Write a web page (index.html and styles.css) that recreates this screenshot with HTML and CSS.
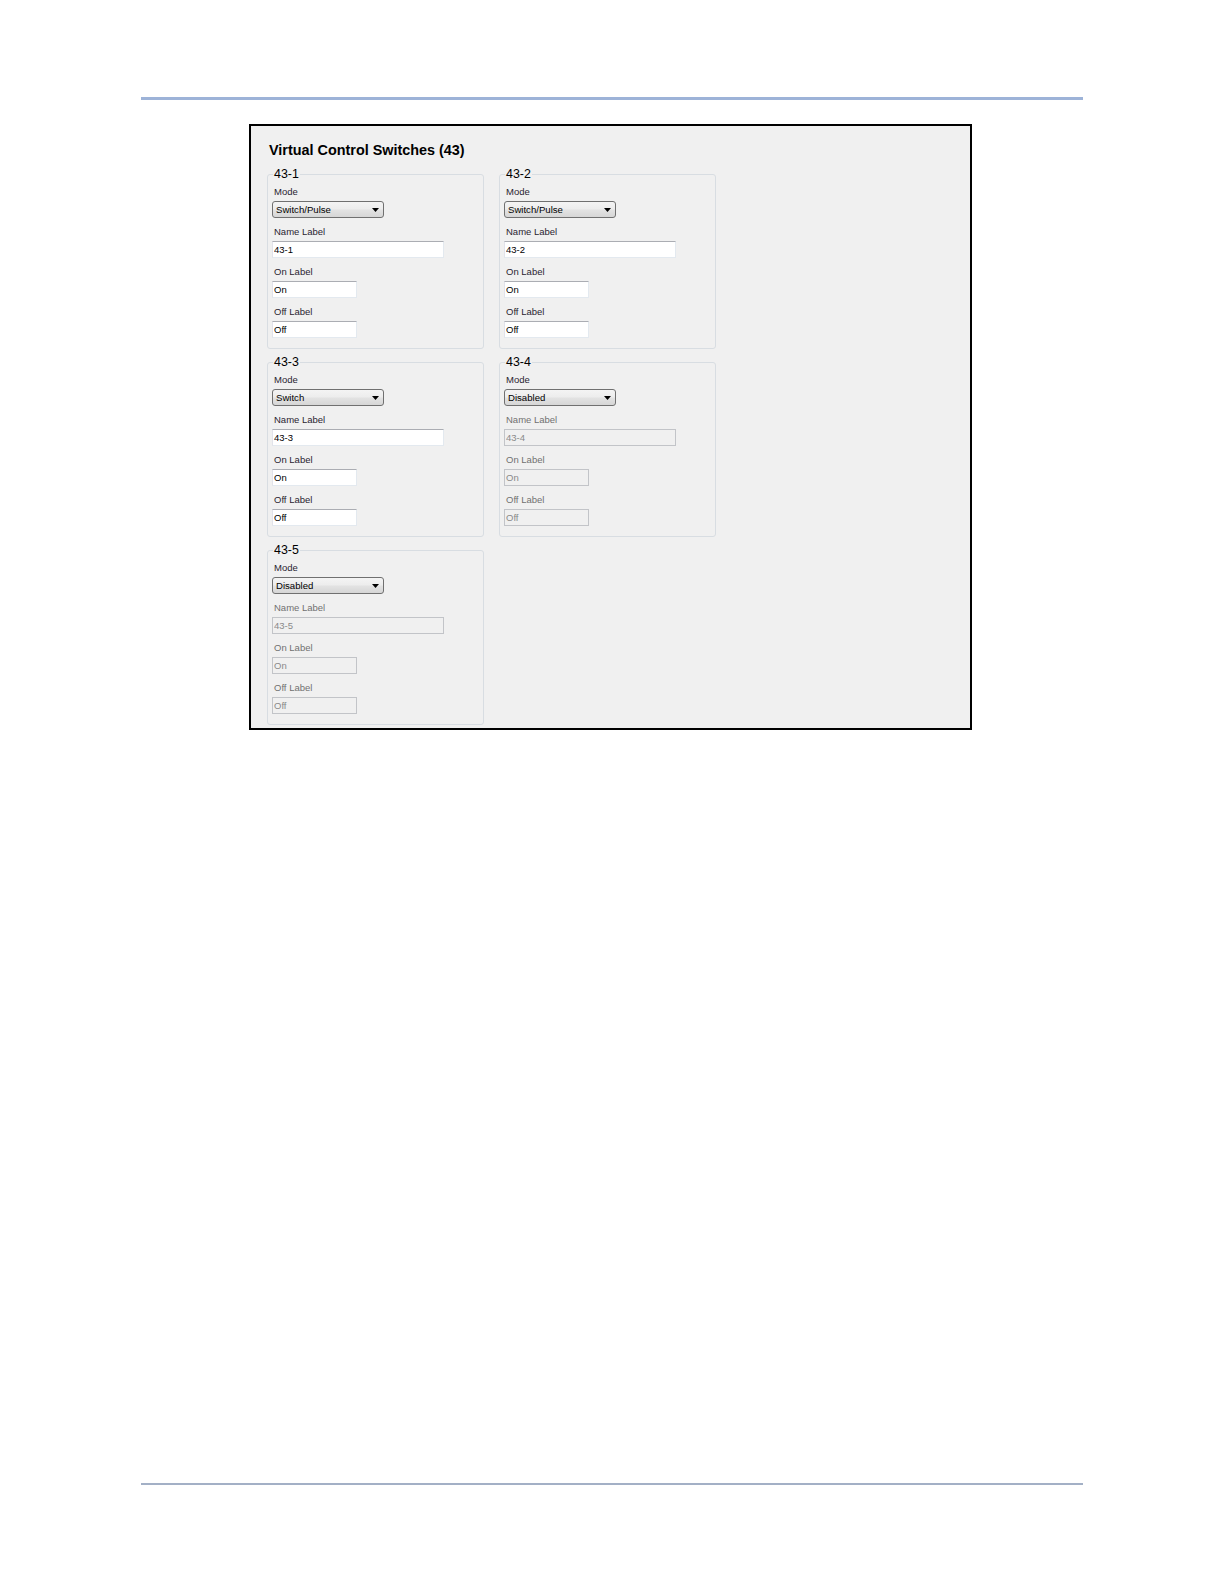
FILE: index.html
```html
<!DOCTYPE html>
<html>
<head>
<meta charset="utf-8">
<link rel="stylesheet" href="styles.css">
</head>
<body>
<div class="page">
  <div class="rule-top"></div>
  <div class="frame">
    <div class="title">Virtual Control Switches (43)</div>
    <div class="grid">
      <fieldset class="group">
        <legend class="legend">43-1</legend>
        <div class="field"><div class="lbl">Mode</div><div class="combo"><span class="combo-text">Switch/Pulse</span><svg class="arrow" width="7" height="4" viewBox="0 0 7 4"><path d="M0 0H7L3.5 4Z" fill="#000"/></svg></div></div>
        <div class="field"><div class="lbl">Name Label</div><input class="tb tb-wide" type="text" value="43-1" readonly></div>
        <div class="field"><div class="lbl">On Label</div><input class="tb tb-short" type="text" value="On" readonly></div>
        <div class="field"><div class="lbl">Off Label</div><input class="tb tb-short" type="text" value="Off" readonly></div>
      </fieldset>
      <fieldset class="group">
        <legend class="legend">43-2</legend>
        <div class="field"><div class="lbl">Mode</div><div class="combo"><span class="combo-text">Switch/Pulse</span><svg class="arrow" width="7" height="4" viewBox="0 0 7 4"><path d="M0 0H7L3.5 4Z" fill="#000"/></svg></div></div>
        <div class="field"><div class="lbl">Name Label</div><input class="tb tb-wide" type="text" value="43-2" readonly></div>
        <div class="field"><div class="lbl">On Label</div><input class="tb tb-short" type="text" value="On" readonly></div>
        <div class="field"><div class="lbl">Off Label</div><input class="tb tb-short" type="text" value="Off" readonly></div>
      </fieldset>
      <fieldset class="group">
        <legend class="legend">43-3</legend>
        <div class="field"><div class="lbl">Mode</div><div class="combo"><span class="combo-text">Switch</span><svg class="arrow" width="7" height="4" viewBox="0 0 7 4"><path d="M0 0H7L3.5 4Z" fill="#000"/></svg></div></div>
        <div class="field"><div class="lbl">Name Label</div><input class="tb tb-wide" type="text" value="43-3" readonly></div>
        <div class="field"><div class="lbl">On Label</div><input class="tb tb-short" type="text" value="On" readonly></div>
        <div class="field"><div class="lbl">Off Label</div><input class="tb tb-short" type="text" value="Off" readonly></div>
      </fieldset>
      <fieldset class="group">
        <legend class="legend">43-4</legend>
        <div class="field"><div class="lbl">Mode</div><div class="combo"><span class="combo-text">Disabled</span><svg class="arrow" width="7" height="4" viewBox="0 0 7 4"><path d="M0 0H7L3.5 4Z" fill="#000"/></svg></div></div>
        <div class="field"><div class="lbl lbl-off">Name Label</div><input class="tb tb-wide tb-off" type="text" value="43-4" disabled></div>
        <div class="field"><div class="lbl lbl-off">On Label</div><input class="tb tb-short tb-off" type="text" value="On" disabled></div>
        <div class="field"><div class="lbl lbl-off">Off Label</div><input class="tb tb-short tb-off" type="text" value="Off" disabled></div>
      </fieldset>
      <fieldset class="group">
        <legend class="legend">43-5</legend>
        <div class="field"><div class="lbl">Mode</div><div class="combo"><span class="combo-text">Disabled</span><svg class="arrow" width="7" height="4" viewBox="0 0 7 4"><path d="M0 0H7L3.5 4Z" fill="#000"/></svg></div></div>
        <div class="field"><div class="lbl lbl-off">Name Label</div><input class="tb tb-wide tb-off" type="text" value="43-5" disabled></div>
        <div class="field"><div class="lbl lbl-off">On Label</div><input class="tb tb-short tb-off" type="text" value="On" disabled></div>
        <div class="field"><div class="lbl lbl-off">Off Label</div><input class="tb tb-short tb-off" type="text" value="Off" disabled></div>
      </fieldset>
    </div>
  </div>
  <div class="rule-bottom"></div>
</div>
</body>
</html>
```
FILE: styles.css
```css
html, body {
  margin: 0;
  padding: 0;
  background: #ffffff;
}
body {
  font-family: "Liberation Sans", Arial, sans-serif;
  color: #000;
}
.page {
  width: 1224px;
  height: 1584px;
  overflow: hidden;
}
.rule-top {
  margin: 97px 0 0 141px;
  width: 942px;
  height: 3px;
  background: #9db3d8;
}
.frame {
  box-sizing: border-box;
  margin: 24px 0 0 249px;
  width: 723px;
  height: 606px;
  border: 2px solid #000;
  background: #f0f0f0;
  padding: 16px 0 0 16px;
}
.title {
  font-weight: bold;
  font-size: 14.4px;
  line-height: 16px;
  padding-left: 2px;
  margin-bottom: 9px;
  color: #000;
}
.grid {
  display: grid;
  grid-template-columns: 217px 217px;
  column-gap: 15px;
  row-gap: 6px;
  align-items: start;
}
.group {
  box-sizing: border-box;
  margin: 0;
  min-width: 0;
  width: 217px;
  padding: 0 4px 10px 4px;
  border: 1px solid #d8dde2;
  border-radius: 3px;
  display: flex;
  flex-direction: column;
  gap: 8px;
}
.legend {
  font-size: 12.4px;
  line-height: 14px;
  padding: 0 1px;
  margin-left: 1px;
  color: #000;
}
.field {
  display: flex;
  flex-direction: column;
  gap: 3px;
  align-items: flex-start;
}
.group > .field:first-of-type {
  padding-top: 5px;
}
.lbl {
  font-size: 9.5px;
  line-height: 12px;
  height: 12px;
  color: #2a2430;
  padding-left: 2px;
}
.lbl-off {
  color: #707070;
}
.combo {
  box-sizing: border-box;
  width: 112px;
  height: 17px;
  border: 1px solid #707070;
  border-radius: 3px;
  background: linear-gradient(#f4f4f4, #ededed 45%, #e2e2e2 55%, #d6d6d6);
  display: flex;
  align-items: center;
  justify-content: space-between;
  padding: 0 4px 0 3px;
}
.combo-text {
  font-size: 9.6px;
  line-height: 12px;
  color: #000;
}
.arrow {
  display: block;
  margin-top: 1px;
}
.tb {
  box-sizing: border-box;
  height: 17px;
  margin: 0;
  border: 1px solid;
  border-color: #abadb3 #e3e9ef #e3e9ef #e2e3ea;
  background: #ffffff;
  font-family: "Liberation Sans", Arial, sans-serif;
  font-size: 9.5px;
  color: #000;
  padding: 0 1px;
  outline: none;
}
.tb-wide {
  width: 172px;
}
.tb-short {
  width: 85px;
}
.tb-off {
  background: #f0f0f0;
  border-color: #c2c4c8;
  color: #8a8a8a;
  -webkit-text-fill-color: #8a8a8a;
}
.rule-bottom {
  margin: 753px 0 0 141px;
  width: 942px;
  height: 2px;
  background: #a3b0c6;
}
```
